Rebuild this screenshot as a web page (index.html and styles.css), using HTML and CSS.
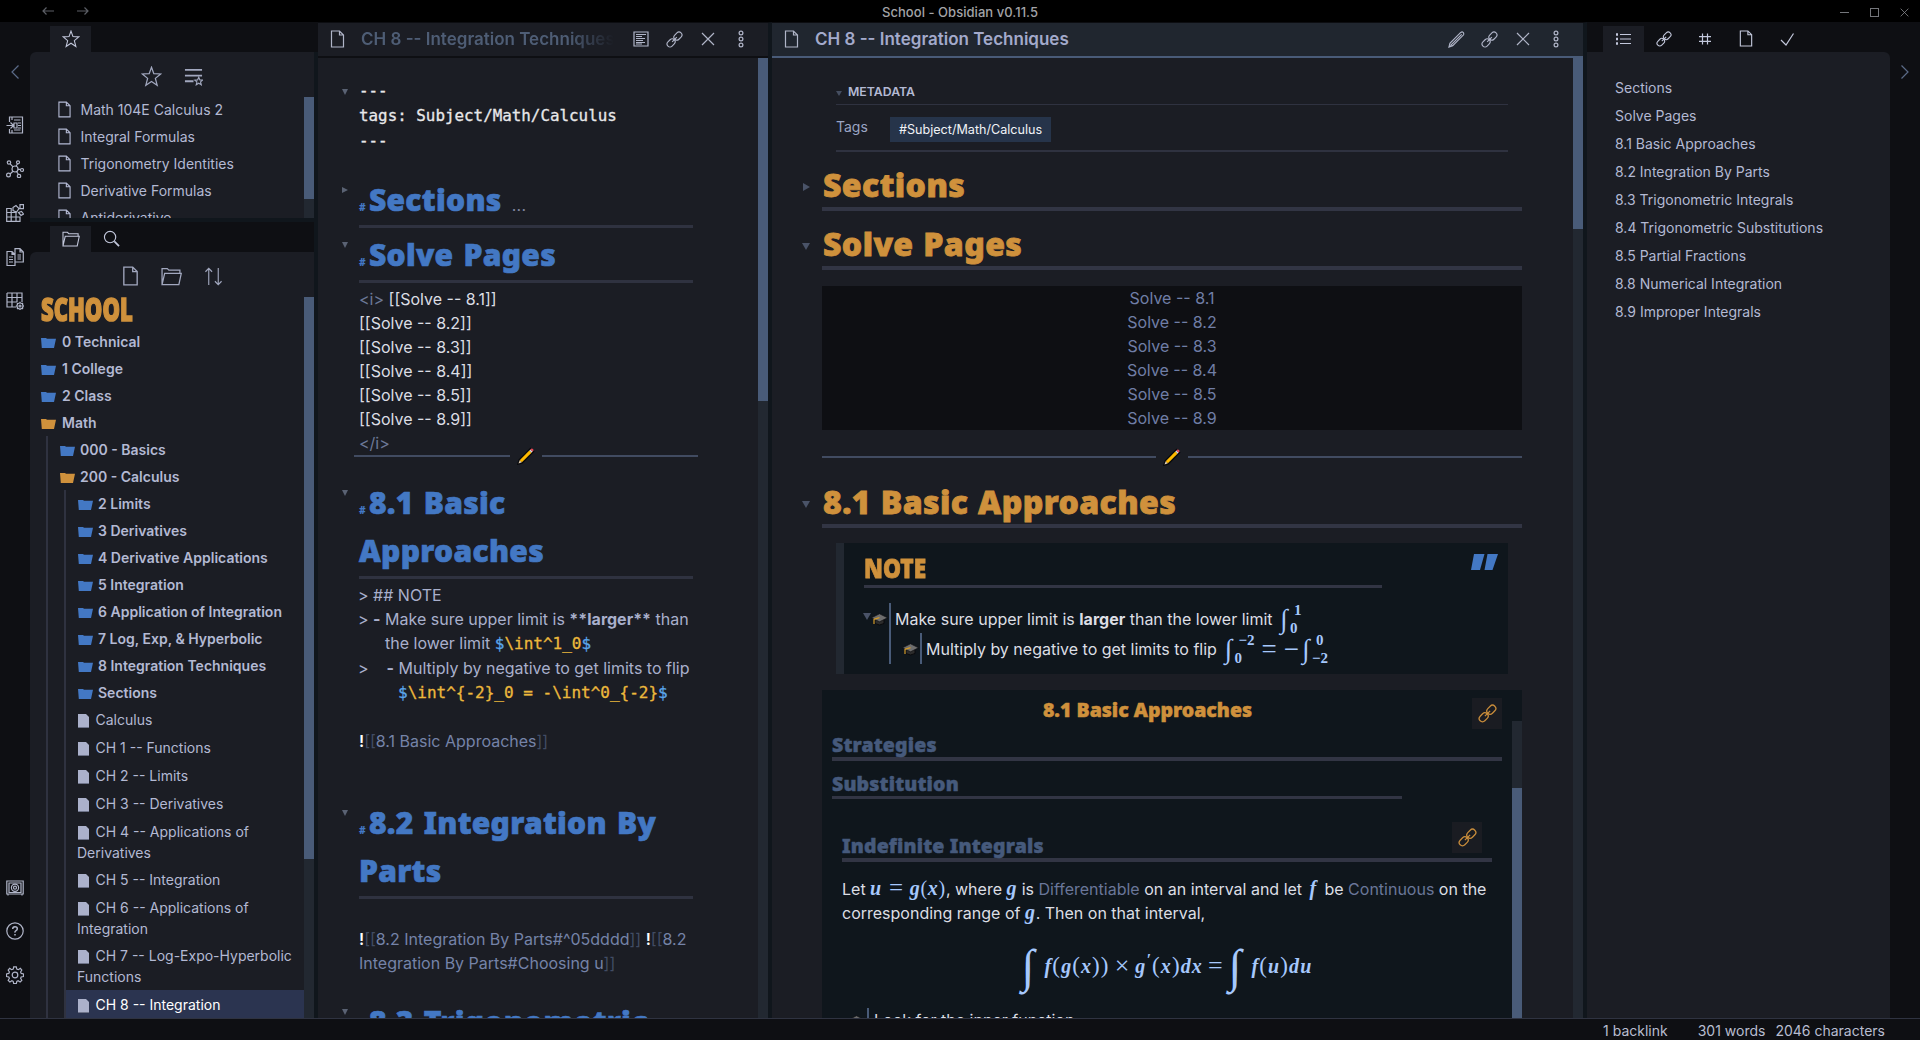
FILE: index.html
```html
<!DOCTYPE html>
<html lang="en">
<head>
<meta charset="utf-8">
<title>School - Obsidian v0.11.5</title>
<link rel="stylesheet" href="styles.css">
</head>
<body>
<svg class="sprite" aria-hidden="true">
  <symbol id="star" viewBox="0 0 20 20"><path d="M10 1.200l2.200 6.100 6.500.3-5 4.200 1.700 6.500L10 14.700 4.600 18.300 6.300 11.800 1.300 7.600l6.500-.3z"/></symbol>
  <symbol id="starlist" viewBox="0 0 20 20"><path stroke-width="1.900" d="M1 3h18M1 9h18M1 15h9"/><path d="M15.500 10.800l1.200 2.800 2.900.2-2.200 1.900.8 3-2.700-1.600-2.600 1.600.7-3-2.200-1.900 2.900-.2z"/></symbol>
  <symbol id="doc" viewBox="0 0 14 18"><path d="M1 1h8l4 4v12H1zM9 1v4h4"/></symbol>
  <symbol id="folder" viewBox="0 0 20 18"><path d="M1 16.800V1.500h5l1.500 1.500H18v3.500M1 16.800h16L19.300 6H3.500z"/></symbol>
  <symbol id="search" viewBox="0 0 18 18"><circle cx="7.500" cy="7.500" r="6"/><path stroke-width="1.800" d="M12 12l5 5"/></symbol>
  <symbol id="sort" viewBox="0 0 20 20"><path d="M5 19V1.500M1.500 5L5 1.300 8.500 5M15 1v17.500M11.500 15l3.500 3.700 3.500-3.700"/></symbol>
  <symbol id="link" viewBox="0 0 18 18"><g transform="rotate(-45 9 9)"><rect x="-.8" y="5.900" width="9.400" height="6.200" rx="3.100"/><rect x="9.400" y="5.900" width="9.400" height="6.200" rx="3.100"/><path d="M5.500 9h7"/></g></symbol>
  <symbol id="close" viewBox="0 0 14 14"><path d="M1 1l12 12M13 1L1 13"/></symbol>
  <symbol id="dots" viewBox="0 0 6 18"><circle cx="3" cy="3" r="1.900"/><circle cx="3" cy="9" r="1.900"/><circle cx="3" cy="15" r="1.900"/></symbol>
  <symbol id="lines" viewBox="0 0 16 16"><path d="M1 1h14v14H1zM3 3.500h10M3 5.500h6M3 7.500h9M3 9.500h7M3 11.500h9M3 13h6"/></symbol>
  <symbol id="pencil" viewBox="0 0 18 18"><path d="M1 17l1-4L13.500 1.500q1.500-1 2.500 0t.5 2.500L5 15.500zM2.500 15.500L14.500 3.500"/></symbol>
  <symbol id="list" viewBox="0 0 16 14"><path d="M5 2.500h11M5 7h11M5 11.500h11"/><path stroke-width="2.500" d="M1 2.500h2M1 7h2M1 11.500h2"/></symbol>
  <symbol id="hash" viewBox="0 0 14 14"><path d="M4.500 1.500v11M9.500 1.500v11M1 4.700h12M1 9.300h12"/></symbol>
  <symbol id="check" viewBox="0 0 14 14"><path d="M1 8l5 5L13.500 1.500"/></symbol>
  <symbol id="chev" viewBox="0 0 8 14"><path d="M7.500.5L1 7l6.500 6.500"/></symbol>
  <symbol id="arrow" viewBox="0 0 12 8"><path d="M12 4H1M4.500 .5L1 4l3.500 3.500"/></symbol>
  <symbol id="openfolder" viewBox="0 0 15 11"><path d="M0 1h5l1 .8h9l-2 9.200H.8z"/></symbol>
  <symbol id="file" viewBox="0 0 11 14"><path d="M0 0h8l3 3v11H0z"/><path d="M0 13.500h11" stroke="#6d7389"/></symbol>
  <symbol id="switcher" viewBox="0 0 18 18"><path d="M3.500 6V1h13v16h-13V13M6 1v3M6 17v-3M8 4h6.500M12 7h3M12 9.500h3M12 12h3M8 14h6.500M.5 9.500h7M4.500 6.500l3 3-3 3M8 7h3v5H8z"/></symbol>
  <symbol id="graph" viewBox="0 0 18 18"><circle cx="9" cy="9" r="3"/><circle cx="3" cy="2.500" r="1.700"/><circle cx="12" cy="2.300" r="1.500"/><circle cx="2.500" cy="15" r="1.900"/><circle cx="16" cy="10" r="1.500"/><circle cx="13" cy="16" r="1.700"/><path d="M4.200 3.800L7 6.800M11.500 3.800L10 6.200M4 14l3-2.800M12 9.300h2.500M10.500 11.500l2 3"/></symbol>
  <symbol id="blocks" viewBox="0 0 18 18"><path d="M.7 4.500h4.500v4H10v8.800H.7zM.7 8.500h4.500M.7 13H14v4.300H10M5.200 8.500v8.800M10 8.500V13M14 13v4M7 3.500l3-2 3 3-2.500 3.500L7 6.500zM14 .7h3.500v4H14zM12.500 8.500l3-1 2 2.500-2.500 1.500z"/></symbol>
  <symbol id="papers" viewBox="0 0 18 18"><path d="M1 3.500h5l3 3v11H1zM6 3.500v3h3M3 9h4M3 11.500h4M3 14h4M9 6V.7h5l3.300 3.300V14H9M14 .7V4h3.300M11.500 7H15M11.500 9H15M11.500 11H15"/></symbol>
  <symbol id="table" viewBox="0 0 18 18"><path d="M1 1h15v9M1 1v14h9M1 5.500h15M1 10h10M6 1v14M11 1v9"/><circle cx="14" cy="14" r="3"/><circle cx="14" cy="14" r="1"/><path d="M14 9.800V11M14 17v1.200M9.800 14H11M17 14h1.200M11 11l1 1M16 16l1 1M17 11l-1 1M11 17l1-1"/></symbol>
  <symbol id="vault" viewBox="0 0 18 16"><path d="M.8 1h16.400v13H.8zM3 3h12v9.500H3z"/><circle cx="9" cy="7.700" r="3.600"/><circle cx="9" cy="7.700" r="1.500"/><path d="M2 14v1.500M16 14v1.500"/></symbol>
  <symbol id="help" viewBox="0 0 18 18"><circle cx="9" cy="9" r="8.200"/><path stroke-width="1.500" d="M6.700 7Q6.700 4.700 9 4.700T11.300 6.800Q11.300 8 10 8.700T9 10.700M9 12v1.600"/></symbol>
  <symbol id="gear" viewBox="0 0 18 18"><circle cx="9" cy="9" r="2.800"/><path d="M7.700.8h2.600l.5 2.300 1.500.6 2-1.300 1.500 1.600-1.200 2 .6 1.400 2.300.5v2.600l-2.300.5-.6 1.300 1.200 2-1.700 1.700-2-1.200-1.300.6-.5 2.300H7.700l-.5-2.300-1.300-.6-2 1.200-1.700-1.700 1.200-2-.6-1.300-2.300-.5V7.900l2.300-.5.6-1.400-1.200-2 1.500-1.600 2 1.300 1.500-.6z"/></symbol>
  <symbol id="crayon" viewBox="0 0 18 18"><path d="M1 17l1.200-4L13.500 1.500l3 3L5 16z" fill="#08090c" stroke="#08090c" stroke-width="1.500"/><path d="M1.500 16.500l1.200-3.300 2.200 2z" fill="#e8d3b8"/><path d="M2.700 13.200L12.300 3.600l2.200 2.200-9.600 9.500z" fill="#ffb900"/><path d="M12.300 3.600l1.200-1.200 2.200 2.200-1.200 1.200z" fill="#d8dde0"/><path d="M13.300 2.500q1.300-1.800 2.700-.5t-.3 2.700z" fill="#e74856"/></symbol>
  <symbol id="cap" viewBox="0 0 17 13"><path d="M4 6v4.500q4.500 3 9 0V6" fill="#2c2c2c" stroke="#08090c"/><path d="M.5 4.800L8.500.8l8 4-8 4z" fill="#6e6e6e" stroke="#08090c" stroke-width=".6"/><path d="M8.500 4.700L3 6.300V11" fill="none" stroke="#d29a28" stroke-width="1.200"/></symbol>
</svg>
<div class="app">
  <header class="titlebar">
    <div class="nav"><svg class="i" width="12" height="8"><use href="#arrow"/></svg><svg class="i flip" width="12" height="8"><use href="#arrow"/></svg></div>
    <div class="title">School - Obsidian v0.11.5</div>
    <div class="winbtns"><span class="min"></span><span class="max"></span><svg class="i" width="9" height="9"><use href="#close"/></svg></div>
  </header>
  <main class="workspace">
    <nav class="ribbon">
      <svg class="i chev" width="8" height="14"><use href="#chev"/></svg>
      <div class="group">
        <svg class="i" width="18" height="18"><use href="#switcher"/></svg>
        <svg class="i" width="18" height="18"><use href="#graph"/></svg>
        <svg class="i" width="18" height="18"><use href="#blocks"/></svg>
        <svg class="i" width="18" height="18"><use href="#papers"/></svg>
        <svg class="i" width="18" height="18"><use href="#table"/></svg>
      </div>
      <div class="group bottom">
        <svg class="i" width="18" height="16"><use href="#vault"/></svg>
        <svg class="i" width="18" height="18"><use href="#help"/></svg>
        <svg class="i" width="18" height="18"><use href="#gear"/></svg>
      </div>
    </nav>
    <aside class="left">
      <div class="tabs"><span class="tab on"><svg class="i" width="18" height="18"><use href="#star"/></svg></span></div>
      <section class="panel starred">
        <div class="tools"><svg class="i" width="21" height="21"><use href="#star"/></svg><svg class="i" width="19" height="19"><use href="#starlist"/></svg></div>
        <div class="scroller">
          <div class="stars">
            <p><svg class="i" width="13" height="17"><use href="#doc"/></svg>Math 104E Calculus 2</p>
            <p><svg class="i" width="13" height="17"><use href="#doc"/></svg>Integral Formulas</p>
            <p><svg class="i" width="13" height="17"><use href="#doc"/></svg>Trigonometry Identities</p>
            <p><svg class="i" width="13" height="17"><use href="#doc"/></svg>Derivative Formulas</p>
            <p><svg class="i" width="13" height="17"><use href="#doc"/></svg>Antiderivative</p>
          </div>
          <div class="bar"><div class="thumb t1"></div></div>
        </div>
      </section>
      <div class="tabs second"><span class="tab on"><svg class="i" width="18" height="16"><use href="#folder"/></svg></span><span class="tab"><svg class="i" width="17" height="17"><use href="#search"/></svg></span></div>
      <section class="panel files">
        <div class="tools"><svg class="i" width="17" height="20"><use href="#doc"/></svg><svg class="i" width="21" height="19"><use href="#folder"/></svg><svg class="i" width="19" height="19"><use href="#sort"/></svg></div>
        <div class="scroller">
          <div class="tree">
            <h1 class="vault"><span>SCHOOL</span></h1>
            <p class="dir"><svg width="15" height="11"><use href="#openfolder"/></svg>0 Technical</p>
            <p class="dir"><svg width="15" height="11"><use href="#openfolder"/></svg>1 College</p>
            <p class="dir"><svg width="15" height="11"><use href="#openfolder"/></svg>2 Class</p>
            <p class="dir open"><svg width="15" height="11"><use href="#openfolder"/></svg>Math</p>
            <div class="kids">
              <p class="dir"><svg width="15" height="11"><use href="#openfolder"/></svg>000 - Basics</p>
              <p class="dir open"><svg width="15" height="11"><use href="#openfolder"/></svg>200 - Calculus</p>
              <div class="kids">
                <p class="dir"><svg width="15" height="11"><use href="#openfolder"/></svg>2 Limits</p>
                <p class="dir"><svg width="15" height="11"><use href="#openfolder"/></svg>3 Derivatives</p>
                <p class="dir"><svg width="15" height="11"><use href="#openfolder"/></svg>4 Derivative Applications</p>
                <p class="dir"><svg width="15" height="11"><use href="#openfolder"/></svg>5 Integration</p>
                <p class="dir"><svg width="15" height="11"><use href="#openfolder"/></svg>6 Application of Integration</p>
                <p class="dir"><svg width="15" height="11"><use href="#openfolder"/></svg>7 Log, Exp, &amp; Hyperbolic</p>
                <p class="dir"><svg width="15" height="11"><use href="#openfolder"/></svg>8 Integration Techniques</p>
                <p class="dir"><svg width="15" height="11"><use href="#openfolder"/></svg>Sections</p>
                <p class="file"><svg width="11" height="14"><use href="#file"/></svg>Calculus</p>
                <p class="file"><svg width="11" height="14"><use href="#file"/></svg>CH 1 -- Functions</p>
                <p class="file"><svg width="11" height="14"><use href="#file"/></svg>CH 2 -- Limits</p>
                <p class="file"><svg width="11" height="14"><use href="#file"/></svg>CH 3 -- Derivatives</p>
                <p class="file two"><svg width="11" height="14"><use href="#file"/></svg>CH 4 -- Applications of<br>Derivatives</p>
                <p class="file"><svg width="11" height="14"><use href="#file"/></svg>CH 5 -- Integration</p>
                <p class="file two"><svg width="11" height="14"><use href="#file"/></svg>CH 6 -- Applications of<br>Integration</p>
                <p class="file two"><svg width="11" height="14"><use href="#file"/></svg>CH 7 -- Log-Expo-Hyperbolic<br>Functions</p>
                <p class="file current"><svg width="11" height="14"><use href="#file"/></svg>CH 8 -- Integration</p>
              </div>
            </div>
          </div>
          <div class="bar"><div class="thumb t2"></div></div>
        </div>
      </section>
    </aside>

    <section class="pane editor">
      <div class="phead">
        <svg class="i" width="15" height="18"><use href="#doc"/></svg>
        <div class="ptitle fade">CH 8 -- Integration Techniques</div>
        <div class="acts"><span><svg class="i" width="16" height="16"><use href="#lines"/></svg></span><span><svg class="i" width="17" height="17"><use href="#link"/></svg></span><span><svg class="i" width="14" height="14"><use href="#close"/></svg></span><span><svg class="i" width="6" height="18"><use href="#dots"/></svg></span></div>
      </div>
      <div class="scroller">
        <div class="source">
          <div class="front fold">---<br>tags: Subject/Math/Calculus<br>---</div>
          <h2 class="fold shut s1"><i>#</i><span>Sections</span><em>...</em></h2>
          <h2 class="fold s2"><i>#</i><span>Solve Pages</span></h2>
          <div class="wiki"><span class="tagc">&lt;i&gt;</span> [[Solve -- 8.1]]<br>[[Solve -- 8.2]]<br>[[Solve -- 8.3]]<br>[[Solve -- 8.4]]<br>[[Solve -- 8.5]]<br>[[Solve -- 8.9]]<br><span class="tagc">&lt;/i&gt;</span></div>
          <div class="rule"><svg width="18" height="18"><use href="#crayon"/></svg></div>
          <h2 class="fold s3"><i>#</i><span>8.1 Basic<br>Approaches</span></h2>
          <div class="quote">
            <p>&gt; ## NOTE</p>
            <p>&gt; <b>-</b> Make sure upper limit is <b>**larger**</b> than</p>
            <p class="in1">the lower limit <code><u>$</u>\int^1_0<u>$</u></code></p>
            <p>&gt;<span class="gap"></span><b>-</b> Multiply by negative to get limits to flip</p>
            <p class="in2"><code><u>$</u>\int^{-2}_0 = -\int^0_{-2}<u>$</u></code></p>
          </div>
          <div class="embedsrc e1"><b>!</b><s>[[</s>8.1 Basic Approaches<s>]]</s></div>
          <h2 class="fold s4"><i>#</i><span>8.2 Integration By<br>Parts</span></h2>
          <div class="embedsrc e2"><b>!</b><s>[[</s>8.2 Integration By Parts#^05dddd<s>]]</s> <b>!</b><s>[[</s>8.2<br>Integration By Parts#Choosing u<s>]]</s></div>
          <h2 class="fold s5"><i>#</i><span>8.3 Trigonometric</span></h2>
        </div>
        <div class="bar"><div class="thumb t3"></div></div>
      </div>
    </section>

    <section class="pane preview">
      <div class="phead">
        <svg class="i" width="15" height="18"><use href="#doc"/></svg>
        <div class="ptitle">CH 8 -- Integration Techniques</div>
        <div class="acts"><span><svg class="i" width="17" height="17"><use href="#pencil"/></svg></span><span><svg class="i" width="17" height="17"><use href="#link"/></svg></span><span><svg class="i" width="14" height="14"><use href="#close"/></svg></span><span><svg class="i" width="6" height="18"><use href="#dots"/></svg></span></div>
      </div>
      <div class="scroller">
        <article class="doc">
          <div class="meta">
            <div class="mhead">METADATA</div>
            <div class="mrow"><span>Tags</span><a>#Subject/Math/Calculus</a></div>
          </div>
          <h1 class="fold shut">Sections</h1>
          <h1 class="fold">Solve Pages</h1>
          <div class="solve">Solve -- 8.1<br>Solve -- 8.2<br>Solve -- 8.3<br>Solve -- 8.4<br>Solve -- 8.5<br>Solve -- 8.9</div>
          <div class="rule"><svg width="18" height="18"><use href="#crayon"/></svg></div>
          <h1 class="fold big">8.1 Basic Approaches</h1>
          <blockquote>
            <svg class="qm" width="27" height="16" viewBox="0 0 27 16"><path d="M3 0h10.500L9 16H0zM16.500 0H27l-5.500 16H13.500z"/></svg>
            <h2><span>NOTE</span></h2>
            <ul>
              <li><svg class="cap" width="17" height="13"><use href="#cap"/></svg>Make sure upper limit is&nbsp;<b>larger</b>&nbsp;than the lower limit <span class="math int"><span class="sg">∫</span><span class="lims"><span class="hi">1</span><span>0</span></span></span></li>
              <li class="sub"><svg class="cap" width="17" height="13"><use href="#cap"/></svg>Multiply by negative to get limits to flip <span class="math int"><span class="sg">∫</span><span class="lims"><span class="hi">−2</span><span>0</span></span></span><span class="math op">=</span><span class="math op">−</span><span class="math int"><span class="sg">∫</span><span class="lims"><span class="hi">0</span><span>−2</span></span></span></li>
            </ul>
          </blockquote>
          <div class="embed">
            <div class="etitle">8.1 Basic Approaches</div>
            <span class="lk l1"><svg class="i" width="19" height="19"><use href="#link"/></svg></span>
            <div class="scroller">
              <div class="ebody">
                <h3 class="h-a">Strategies</h3>
                <h3 class="h-b">Substitution</h3>
                <div class="inner">
                  <span class="lk l2"><svg class="i" width="19" height="19"><use href="#link"/></svg></span>
                  <h3 class="h-c">Indefinite Integrals</h3>
                  <p>Let <span class="math v">u<q class="eq">=</q>g<q>(</q>x<q>)</q></span>, where <span class="math v">g</span> is <a>Differentiable</a> on an interval and let <span class="math v f">f</span> be <a>Continuous</a> on the<br>corresponding range of <span class="math v">g</span>. Then on that interval,</p>
                  <div class="math display"><span class="big">∫</span><span class="v">f<q>(</q>g<q>(</q>x<q>))</q></span><span class="o">×</span><span class="v">g<sup>′</sup><q>(</q>x<q>)</q>dx</span><span class="o">=</span><span class="big">∫</span><span class="v">f<q>(</q>u<q>)</q>du</span></div>
                  <div class="look"><svg class="cap" width="17" height="13"><use href="#cap"/></svg>Look for the inner function</div>
                </div>
              </div>
              <div class="bar"><div class="thumb t5"></div></div>
            </div>
          </div>
        </article>
        <div class="bar"><div class="thumb t4"></div></div>
      </div>
    </section>

    <aside class="right">
      <div class="tabs"><span class="tab on"><svg class="i" width="16" height="14"><use href="#list"/></svg></span><span class="tab"><svg class="i" width="16" height="16"><use href="#link"/></svg></span><span class="tab"><svg class="i" width="14" height="14"><use href="#hash"/></svg></span><span class="tab"><svg class="i" width="14" height="17"><use href="#doc"/></svg></span><span class="tab"><svg class="i" width="14" height="14"><use href="#check"/></svg></span></div>
      <div class="rbody">
        <section class="outline">
          <p>Sections</p><p>Solve Pages</p><p>8.1 Basic Approaches</p><p>8.2 Integration By Parts</p><p>8.3 Trigonometric Integrals</p><p>8.4 Trigonometric Substitutions</p><p>8.5 Partial Fractions</p><p>8.8 Numerical Integration</p><p>8.9 Improper Integrals</p>
        </section>
        <div class="rrib"><svg class="i flip" width="8" height="14"><use href="#chev"/></svg></div>
      </div>
    </aside>
  </main>
  <footer class="status"><span>1 backlink</span><span>301 words</span><span>2046 characters</span></footer>
</div>
</body>
</html>
```
FILE: styles.css
```css
:root {
  --bg: #1b1d24;
  --dark: #0e0f13;
  --split: #10161c;
  --track: #222831;
  --thumb: #495b78;
  --line: #2f3240;
  --text: #b3b9d3;
  --blue: #4378c4;
  --orange: #cf913c;
  --math: #a6c8fc;
  --head: "Noto Sans", "Open Sans", sans-serif;
}
* { box-sizing: border-box; margin: 0; padding: 0; }
body { background: #000; font-family: Inter, sans-serif; color: var(--text); overflow: hidden; }
.sprite { position: absolute; width: 0; height: 0; }
.i { fill: none; stroke: currentColor; stroke-width: 1.2; flex: none; display: block; }
.flip { transform: scaleX(-1); }
.app { width: 1920px; height: 1040px; display: flex; flex-direction: column; overflow: hidden; }

.titlebar { height: 22px; background: #000; display: grid; grid-template-columns: 1fr auto 1fr; align-items: center; flex: none; color: #5c5f66; }
.nav { display: flex; gap: 23px; padding-left: 42px; }
.title { font-size: 13px; font-weight: 500; color: #a3a4a8; letter-spacing: .05px; padding-top: 1px; }
.winbtns { display: flex; justify-content: flex-end; align-items: center; gap: 21px; padding: 2px 11px 0 0; }
.winbtns svg { color: #8b8d92; }
.min { width: 9px; height: 1px; background: #74767b; }
.max { width: 9px; height: 9px; border: 1px solid #74767b; }

.workspace { flex: 1; display: grid; grid-template-columns: 30px 288px 454px 815px 333px; grid-template-rows: minmax(0, 1fr); min-height: 0; background: var(--split); }
.ribbon { background: var(--dark); display: flex; flex-direction: column; align-items: center; padding: 43px 0 34px; color: #b0b5c8; }
.ribbon .chev, .rrib { color: #5b6b88; }
.group { display: flex; flex-direction: column; gap: 26px; margin-top: 37px; align-items: center; }
.bottom { margin-top: auto; }

.left { display: flex; flex-direction: column; background: var(--dark); border-right: 4px solid var(--split); min-height: 0; }
.tabs { height: 30px; padding: 4px 0 0 20px; display: flex; flex: none; background: var(--dark); }
.left .tabs:first-child { margin-right: -4px; }
.tab { width: 41px; display: flex; align-items: center; justify-content: center; color: #c3c8dc; }
.tab.on { background: var(--bg); }
.left .tab { padding-bottom: 1px; }
.panel { background: var(--bg); border-radius: 6px 0 0 0; display: flex; flex-direction: column; min-height: 0; }
.starred { height: 166px; flex: none; margin-bottom: 4px; box-shadow: 0 4px 0 var(--split); }
.files { flex: 1; }
.tools { display: flex; align-items: center; justify-content: center; height: 45px; flex: none; color: #a2a8bf; padding: 3px 0 0 0; gap: 22px; }
.scroller { flex: 1; display: grid; grid-template-columns: minmax(0, 1fr) 10px; grid-template-rows: minmax(0, 1fr); min-height: 0; overflow: hidden; }
.bar { background: var(--track); }
.thumb { background: var(--thumb); }
.t1 { height: 102px; }
.t2 { height: 562px; }
.t3 { height: 343px; }
.t4 { height: 171px; }
.t5 { height: 100%; }
.stars { margin-top: -1px; }
.stars p { height: 27px; display: flex; align-items: center; padding-left: 27.500px; gap: 10px; font-size: 14px; }

.tree { overflow: hidden; font-size: 14px; min-height: 0; }
.vault { height: 31px; padding-left: 11px; font: 900 31px/25px var(--head); color: var(--orange); }
.vault span { display: inline-block; transform: scaleX(.71); transform-origin: 0 50%; -webkit-text-stroke: 1.500px var(--orange); }
.dir { height: 27px; display: flex; align-items: center; gap: 6px; padding-left: 11px; font-weight: 600; white-space: nowrap; }
.dir svg { fill: var(--blue); margin-top: 2px; }
.dir.open svg { fill: var(--orange); }
.kids { border-left: 2px solid var(--line); margin-left: 16px; padding-left: 0; }
.kids .dir { padding-left: 11.500px; gap: 5.500px; }
.kids .kids { margin-left: 16px; }
.file { line-height: 21px; padding: 3px 0 4px 11px; white-space: nowrap; }
.file svg { fill: #abb1cb; margin: 0 6.500px 0 1px; vertical-align: -3px; }
.file.two { margin-bottom: -1px; }
.file.current { background: #2b3450; color: #fff; padding: 4px 0 12px 11px; margin-top: -1px; }

.pane { display: flex; flex-direction: column; background: var(--bg); border-right: 4px solid var(--split); min-height: 0; border-top: 1px solid #0c0d11; }
.phead { height: 35px; flex: none; display: flex; align-items: center; border-bottom: 2px solid var(--dark); padding: 0 10px 1px 12px; color: #b0b5c8; }
.preview .phead { background: #20262f; border-color: var(--thumb); }
.ptitle { font-size: 17px; font-weight: 600; margin-left: 16px; flex: 1; white-space: nowrap; overflow: hidden; line-height: 30px; }
.preview .ptitle { color: #a3aacb; font-weight: 600; }
.fade { color: #4e5d75; max-width: 253px; -webkit-mask-image: linear-gradient(90deg, #000 82%, transparent); mask-image: linear-gradient(90deg, #000 82%, transparent); }
.acts { margin-left: auto; display: flex; align-items: center; }
.acts span { width: 33.300px; display: flex; justify-content: center; }

.source { padding: 20px 65px 0 41px; font-size: 16px; line-height: 24px; overflow: hidden; min-height: 0; }
.fold { position: relative; }
.fold::before { content: ""; position: absolute; left: -17px; top: 11px; border: 3px solid transparent; border-top: 6px solid #5a6273; border-bottom: 0; }
.front { font: 15.870px/25px "DejaVu Sans Mono", monospace; color: #e8e8ea; white-space: nowrap; margin-bottom: 23px; -webkit-text-stroke: .3px; }
.source h2 { font: 900 30px/48px var(--head); color: var(--blue); border-bottom: 3px solid var(--line); padding-bottom: 1px; white-space: nowrap; letter-spacing: .3px; word-spacing: 2px; -webkit-text-stroke: .7px; }
.source h2 i { font-size: 10px; line-height: 0; font-style: normal; margin-right: 3px; -webkit-text-stroke: 0; }
.source h2 em { font: 400 16px/0 Inter, sans-serif; color: #8087a0; margin-left: 10px; -webkit-text-stroke: 0; }
.source .shut::before { border: 3px solid transparent; border-left: 6px solid #5a6273; border-right: 0; }
.s2 { margin-top: 3px; }
.s3 { margin-top: 22px; }
.s4 { margin-top: 46px; }
.s5 { margin-top: 23px; }
.wiki { padding-top: 4px; color: #dcdee4; }
.tagc { color: #6c7896; }
.rule { height: 2px; display: flex; align-items: center; justify-content: center; background: linear-gradient(90deg, #414b61 calc(50% - 16px), transparent 0 calc(50% + 16px), #414b61 0); }
.source .rule { margin: 0 -5px; }
.quote { padding-top: 4px; margin-left: -1px; white-space: nowrap; color: #a9b0cc; }
.quote p { height: 24px; }
.quote p:nth-child(n+4) { position: relative; top: 1px; }
.in1 { padding-left: 27px; }
.in2 { padding-left: 40px; }
.gap { display: inline-block; width: 18px; }
code { font: 16px/0 "DejaVu Sans Mono", monospace; color: #ecb83c; -webkit-text-stroke: .3px; }
code u { color: #5aa5ea; text-decoration: none; }
.embedsrc { color: #7583a8; white-space: nowrap; }
.embedsrc s { color: #414c63; text-decoration: none; }
.embedsrc b { color: #fff; font-weight: 600; }
.e1 { margin-top: 26px; }
.e2 { margin-top: 28px; }

.doc { padding: 22px 51px 0 50px; font-size: 16px; overflow: hidden; min-height: 0; display: flex; flex-direction: column; }
.meta { margin: 0 14px; border-bottom: 2px solid var(--line); }
.mhead { font-size: 12.300px; font-weight: 600; height: 25px; line-height: 24px; border-bottom: 1px solid var(--line); padding-left: 12px; position: relative; }
.mhead::before { content: ""; position: absolute; left: 0; top: 11px; border: 3px solid transparent; border-top: 5px solid #454e60; border-bottom: 0; }
.mrow { height: 45px; display: flex; font-size: 14px; }
.mrow span { width: 54px; line-height: 44px; color: #9aa5c4; }
.mrow a { align-self: center; margin-top: 4px; height: 25px; line-height: 25px; padding: 0 9px; background: #26344a; color: #f0f2f6; font-size: 12.600px; }
.doc h1 { font: 900 32px/44px var(--head); color: var(--orange); border-bottom: 4px solid #323544; margin-top: 11px; padding-left: 1px; white-space: nowrap; flex: none; letter-spacing: .4px; word-spacing: 1px; -webkit-text-stroke: .8px; }
.doc .fold::before { left: -20px; top: 21px; border-width: 7px 4px 0; border-color: #4a5368 transparent transparent; border-style: solid; }
.doc .shut::before { border-width: 4px 0 4px 7px; border-color: transparent transparent transparent #4a5368; top: 20px; left: -19px; }
.solve { margin-top: 16px; background: var(--dark); text-align: center; line-height: 24px; color: #707ea6; flex: none; }
.doc .rule { margin-top: 26px; flex: none; }
.doc h1.big { margin-top: 22px; }
blockquote { margin: 15px 14px 0; height: 131px; flex: none; background: #0f161c; border-left: 8px solid var(--track); padding: 8px 126px 0 20px; position: relative; color: #dcdee4; }
.qm { position: absolute; right: 10px; top: 11px; fill: var(--blue); }
blockquote h2 { font: 900 27px/34px var(--head); color: var(--orange); border-bottom: 3px solid #323544; }
blockquote h2 span { display: inline-block; transform: scaleX(.84); transform-origin: 0 50%; -webkit-text-stroke: .8px var(--orange); }
ul { list-style: none; margin: 15px 0 0 25px; border-left: 2px solid var(--thumb); height: 61px; position: relative; }
ul::before { content: ""; position: absolute; left: -28px; top: 10px; border: 4px solid transparent; border-top: 7px solid #4a5368; border-bottom: 0; }
li { height: 30px; display: flex; align-items: center; padding-left: 4px; position: relative; white-space: pre; padding-top: 2px; }
li .cap { position: absolute; left: -20px; top: 10px; }
li.sub { margin-left: 29px; height: 31px; border-left: 2px solid var(--thumb); padding-top: 0; }
li.sub .cap { left: -20px; }
.math { color: var(--math); font-family: "Liberation Serif", serif; }
.int { display: inline-flex; align-items: center; height: 30px; margin-left: 3px; }
.sg { font-size: 27px; line-height: 28px; width: 13px; font-style: italic; }
.lims { display: flex; flex-direction: column; justify-content: space-between; height: 30px; font-size: 15px; font-weight: 700; line-height: 12px; margin-left: -3px; }
.lims .hi { margin-left: 4px; }
.op { font-size: 27px; line-height: 24px; margin: 0 0 0 7px; }
.embed { position: relative; margin-top: 16px; background: #0f161c; flex: 1; display: flex; flex-direction: column; min-height: 0; }
.etitle { height: 31px; flex: none; text-align: center; padding-right: 49px; font: 900 19.500px/40px var(--head); color: var(--orange); -webkit-text-stroke: .5px; }
.lk { position: absolute; width: 30px; height: 31px; background: #1a1c22; color: #c98d3b; display: flex; align-items: center; justify-content: center; }
.l1 { right: 20px; top: 8px; }
.l2 { right: 20px; top: -12px; }
.ebody { padding: 12px 10px 0 10px; color: #dcdee4; overflow: hidden; }
.ebody h3 { font: 900 19.500px/24px var(--head); color: #465a7c; border-bottom: 4px solid #323544; letter-spacing: .15px; -webkit-text-stroke: .5px; }
.embed .bar { padding-top: 67px; }
.ebody .h-b { margin: 11px 100px 0 0; border-bottom-width: 3px; }
.inner { padding: 0 10px; margin-top: 35px; position: relative; }
.inner p { margin-top: 15px; line-height: 24px; white-space: nowrap; height: 48px; }
.inner a { color: #6a7699; }
.v { font-style: italic; font-weight: 700; font-size: 20px; line-height: 20px; }
.inner p .v { letter-spacing: .7px; line-height: 0; }
.v.f { padding: 0 3px 0 3px; }
q { quotes: none; font-style: normal; font-weight: 400; }
q.eq { font-size: 25px; line-height: 0; margin: 0 6px 0 7px; vertical-align: -1px; }
q::before, q::after { content: none; }
.display { height: 62px; margin: 10px 0 2px; display: flex; align-items: center; justify-content: center; }
.display .v { font-size: 20px; letter-spacing: 1.100px; }
.display .v q { font-size: 23px; line-height: 20px; }
.display .big { font-size: 47px; font-style: italic; line-height: 60px; width: 23px; padding-right: 3px; }
.display .o { font-size: 26px; margin: 0 6px 0 5px; }
.display sup { font-size: 16px; line-height: 0; }
.look { margin: 11px 0 0 25px; border-left: 2px solid var(--thumb); padding-left: 5px; line-height: 24px; height: 24px; position: relative; }
.look .cap { position: absolute; left: -21px; top: 7px; }

.right { display: flex; flex-direction: column; min-height: 0; background: var(--dark); }
.right .tabs { padding-left: 16px; }
.right .tab { padding: 0 1px 1px 0; }
.rbody { flex: 1; display: grid; grid-template-columns: 303px 30px; }
.outline { background: var(--bg); border-radius: 0 6px 0 0; padding: 22px 0 0 28px; font-size: 14px; }
.outline p { height: 28px; line-height: 28px; }
.rrib { display: flex; justify-content: center; padding-top: 13px; background: var(--dark); }

.status { height: 22px; flex: none; border-top: 1px solid #2f3341; background: var(--dark); display: flex; justify-content: flex-end; align-items: center; padding: 2px 35px 0 0; font-size: 14px; color: #b8bdd0; }
.status span:nth-child(2) { margin: 0 10px 0 30px; }
```
